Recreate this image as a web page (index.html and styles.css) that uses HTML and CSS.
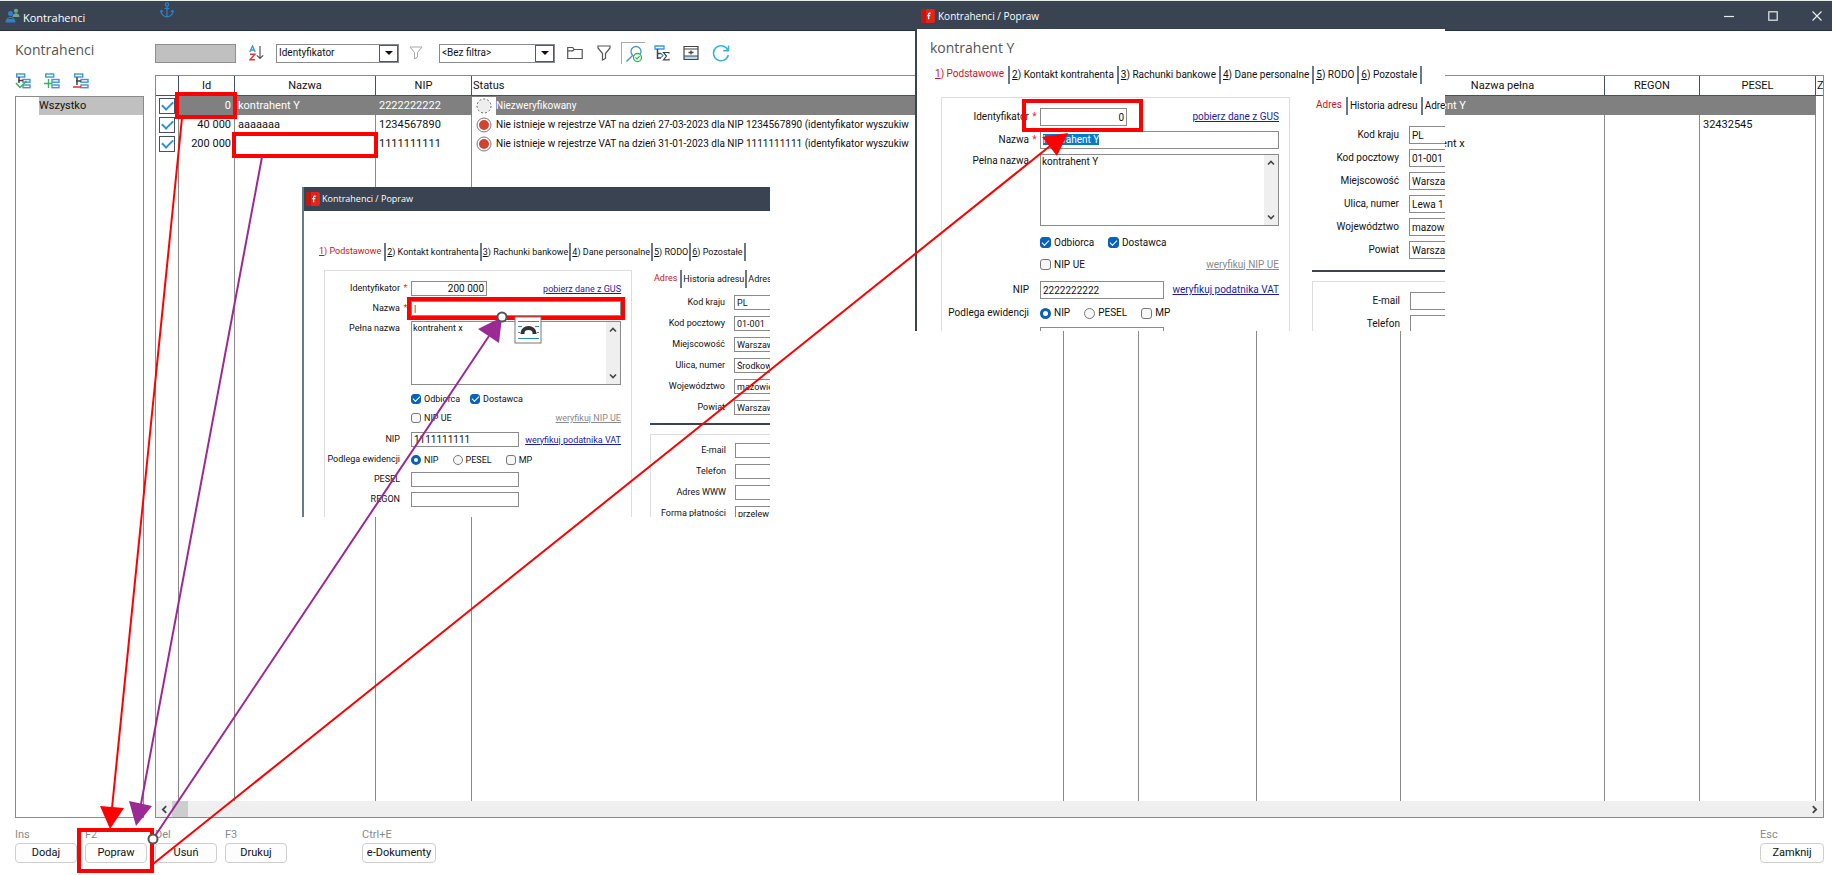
FILE: index.html
```html
<!DOCTYPE html>
<html lang="pl">
<head>
<meta charset="utf-8">
<title>Kontrahenci</title>
<link rel="stylesheet" href="styles.css">
</head>
<body>
<svg class="defs" aria-hidden="true">
  <symbol id="logo" viewBox="0 0 14 14"><rect width="14" height="14" rx="2" fill="#e1251b"/><path d="M0 2a2 2 0 0 1 2-2h3v14H2a2 2 0 0 1-2-2z" fill="#c4170f"/><path d="M9.600 4.300Q7.600 3.800 7.600 5.700V10.300M6.300 6.600h2.900" fill="none" stroke="#fff" stroke-width="1.300"/></symbol>
  <symbol id="tree" viewBox="0 0 16 16"><g fill="none" stroke="#3f97d3" stroke-width="1.400"><rect x="1.700" y="1" width="8" height="3"/><rect x="8" y="6.500" width="7" height="2.700"/><rect x="8" y="12" width="7" height="2.700"/></g></symbol>
  <symbol id="chev" viewBox="0 0 8 8"><path d="M1 5.500 4 2.500 7 5.500" fill="none" stroke="#444" stroke-width="1.600"/></symbol>
</svg>
<div class="app">
  <header class="titlebar">
    <svg class="titlebar-icon" viewBox="0 0 15 15"><circle cx="11" cy="2.800" r="2.100" fill="#6fa58c"/><path d="M7.500 9c0-5 7-5 7 0z" fill="#6fa58c"/><circle cx="5.500" cy="5.500" r="2.500" fill="#2f80cb"/><path d="M.5 14.500c0-7.500 10-7.500 10 0z" fill="#2f80cb"/><path d="M3.500 10.500h4" stroke="#39434f"/></svg>
    <span class="titlebar-text">Kontrahenci</span>
    <svg class="anchor" viewBox="0 0 14 16"><g fill="none" stroke="#2f80cb" stroke-width="1.200"><circle cx="7" cy="2.500" r="1.700"/><path d="M7 4.200V15M4.500 6.500h5M1 8.500c0 4 2.500 6 6 6.500 3.500-.5 6-2.500 6-6.500M.5 10.500 1.200 8.500 3 9.700M13.500 10.500 12.800 8.500 11 9.700"/></g></svg>
    <div class="win-controls">
      <button aria-label="Minimalizuj"><svg viewBox="0 0 10 10"><path d="M0 5.500h10" stroke="#e8eaed" stroke-width="1.200"/></svg></button>
      <button aria-label="Maksymalizuj"><svg viewBox="0 0 10 10"><rect x=".8" y=".8" width="8.400" height="8.400" fill="none" stroke="#e8eaed" stroke-width="1.200"/></svg></button>
      <button aria-label="Zamknij okno"><svg viewBox="0 0 10 10"><path d="M.5.5l9 9M9.500.5l-9 9" stroke="#e8eaed" stroke-width="1.200"/></svg></button>
    </div>
  </header>

  <div class="body">
    <aside class="side">
      <h1 class="heading">Kontrahenci</h1>
      <div class="side-tools">
        <button aria-label="Zaznacz grupę"><svg viewBox="0 0 16 16"><use href="#tree"/><path d="M4 4v6M3 7.500h5" stroke="#444" stroke-width="1.500"/><path d="M1 10 5 14.500 11.500 8" fill="none" stroke="#35b558" stroke-width="1.500"/></svg></button>
        <button aria-label="Dodaj grupę"><svg viewBox="0 0 16 16"><use href="#tree"/><path d="M4.500 6v9M0 10.500h8.500" stroke="#35b558" stroke-width="1.400"/></svg></button>
        <button aria-label="Usuń grupę"><svg viewBox="0 0 16 16"><use href="#tree"/><path d="M4 4v8M3 8h5" stroke="#444" stroke-width="1.500"/><path d="M0 14h8" stroke="#e23b3b" stroke-width="1.600"/></svg></button>
      </div>
      <div class="tree"><div class="tree-item">Wszystko</div></div>
    </aside>

    <main class="main">
      <div class="toolbar">
        <input class="search" type="text" aria-label="Szukaj">
        <button class="tool" aria-label="Sortuj"><svg class="i-sort" viewBox="0 0 15 16"><g fill="none" stroke-width="1.400"><path d="M.8 7 3.500 1 6.200 7M1.800 5h3.400" stroke="#3f97d3"/><path d="M1 9.200h5L1 14.800h5" stroke="#e23b3b"/><path d="M11 1v12M7.800 10.300 11 13.500l3.200-3.200" stroke="#555" stroke-width="1.200"/></g></svg></button>
        <div class="combo combo-wide"><select aria-label="Sortowanie"><option>Identyfikator</option></select><span class="combo-arrow"></span></div>
        <button class="tool" aria-label="Filtr"><svg class="i-14 pale" viewBox="0 0 14 14"><path d="M1 1h12L8.500 6.500V11L5.500 13V6.500z" fill="none" stroke="#555"/></svg></button>
        <div class="combo"><select aria-label="Filtr"><option>&lt;Bez filtra&gt;</option></select><span class="combo-arrow"></span></div>
        <div class="tool-group">
          <button class="tool" aria-label="Otwórz"><svg class="i-16" viewBox="0 0 16 16"><path d="M.7 13.500v-11h5l1.500 2h8v9zM.7 5.800h5l1.500-1.300" fill="none" stroke="#555" stroke-width="1.200"/></svg></button>
          <button class="tool" aria-label="Filtruj"><svg class="i-16" viewBox="0 0 16 16"><path d="M2 1h12v2L9.500 8.500v5L6.500 15V8.500L2 3z" fill="none" stroke="#555" stroke-width="1.200"/></svg></button>
          <button class="tool tool-on" aria-label="Weryfikuj"><svg class="i-18" viewBox="0 0 18 18"><circle cx="11" cy="6.500" r="5" fill="none" stroke="#3f97d3" stroke-width="1.300"/><path d="M7.500 10.500 1.500 16.500" stroke="#3f97d3" stroke-width="1.500"/><circle cx="12.500" cy="12.500" r="4" fill="#fff" stroke="#35b558" stroke-width="1.300"/><path d="M10.500 12.500l1.500 1.500 2.700-2.900" fill="none" stroke="#35b558" stroke-width="1.200"/></svg></button>
          <button class="tool" aria-label="Sumy"><svg class="i-16" viewBox="0 0 16 16"><path d="M1 1h9v3H1z" fill="none" stroke="#3f97d3" stroke-width="1.300"/><path d="M3.500 4v10M3 8.500h4M3 13h4" fill="none" stroke="#444" stroke-width="1.500"/><path d="M7 8.500l2 2-2 2" fill="none" stroke="#3f97d3" stroke-width="1.200"/><path d="M15 8.500V7.500H9.500l3 3.500-3 3.800H15v-1" fill="none" stroke="#444" stroke-width="1.200"/></svg></button>
          <button class="tool" aria-label="Panel"><svg class="i-16" viewBox="0 0 16 16"><path d="M1 11h14v3H1z" fill="#b5daf2"/><path d="M1 1.500h14v13H1zM1 4h14M1 11h14" fill="none" stroke="#444" stroke-width="1.200"/><path d="M8 5.500v4M5.500 7.500h5" stroke="#444" stroke-width="1.300"/></svg></button>
          <button class="tool" aria-label="Odśwież"><svg class="i-18" viewBox="0 0 18 18"><path d="M16 6.500A7.500 7.500 0 1 0 16.300 11M16.500 1.500v5.300h-5.300" fill="none" stroke="#35b3dc" stroke-width="1.500"/></svg></button>
        </div>
      </div>

      <div class="grid-box">
        <div class="grid-scroll">
        <table class="grid">
          <colgroup><col class="c-check"><col class="c-id"><col class="c-name"><col class="c-nip"><col><col class="c-a"><col class="c-b"><col class="c-c"><col class="c-full"><col class="c-regon"><col class="c-pesel"><col class="c-z"></colgroup>
          <thead><tr><th></th><th>Id</th><th>Nazwa</th><th>NIP</th><th class="left">Status</th><th></th><th></th><th></th><th>Nazwa pełna</th><th>REGON</th><th>PESEL</th><th class="left">Z</th></tr></thead>
          <tbody>
            <tr class="sel"><td class="tick"><input type="checkbox" checked aria-label="kontrahent Y"></td><td class="num">0</td><td>kontrahent Y</td><td>2222222222</td><td class="status"><span class="status-line"><svg class="st st-none" viewBox="0 0 24 18"><circle cx="12" cy="9" r="7" fill="#eee" stroke="#666" stroke-dasharray="2 2"/></svg>Niezweryfikowany</span></td><td></td><td></td><td></td><td>kontrahent Y</td><td></td><td></td><td class="blank"></td></tr>
            <tr><td class="tick"><input type="checkbox" checked aria-label="aaaaaaa"></td><td class="num">40 000</td><td>aaaaaaa</td><td>1234567890</td><td class="status"><span class="status-line"><svg class="st" viewBox="0 0 24 18"><circle cx="12" cy="9" r="7" fill="#fff" stroke="#777"/><circle cx="12" cy="9" r="5" fill="#d0432f"/></svg>Nie istnieje w rejestrze VAT na dzień 27-03-2023 dla NIP 1234567890 (identyfikator wyszukiw</span></td><td></td><td></td><td></td><td></td><td></td><td>32432545</td><td></td></tr>
            <tr><td class="tick"><input type="checkbox" checked aria-label="200 000"></td><td class="num">200 000</td><td></td><td>1111111111</td><td class="status"><span class="status-line"><svg class="st" viewBox="0 0 24 18"><circle cx="12" cy="9" r="7" fill="#fff" stroke="#777"/><circle cx="12" cy="9" r="5" fill="#d0432f"/></svg>Nie istnieje w rejestrze VAT na dzień 31-01-2023 dla NIP 1111111111 (identyfikator wyszukiw</span></td><td></td><td></td><td></td><td>kontrahent x</td><td></td><td></td><td></td></tr>
            <tr class="filler"><td></td><td></td><td></td><td></td><td></td><td></td><td></td><td></td><td></td><td></td><td></td><td></td></tr>
          </tbody>
        </table>
        </div>
        <div class="hscroll"><svg class="to-left" viewBox="0 0 8 8"><use href="#chev"/></svg><span class="thumb"></span><svg class="to-right" viewBox="0 0 8 8"><use href="#chev"/></svg></div>
      </div>
    </main>
  </div>

  <footer class="actions">
    <div class="action"><span>Ins</span><button>Dodaj</button></div>
    <div class="action"><span>F2</span><button>Popraw</button></div>
    <div class="action"><span>Del</span><button>Usuń</button></div>
    <div class="action"><span>F3</span><button>Drukuj</button></div>
    <div class="action action-docs"><span>Ctrl+E</span><button>e-Dokumenty</button></div>
    <div class="action action-close"><span>Esc</span><button>Zamknij</button></div>
  </footer>

  <section class="dialog dialog-small">
    <header class="dialog-title"><svg viewBox="0 0 14 14"><use href="#logo"/></svg>Kontrahenci / Popraw</header>
    <h2 class="dialog-heading"></h2>
    <nav class="tabs"><button class="on"><u>1</u>) Podstawowe</button><button><u>2</u>) Kontakt kontrahenta</button><button><u>3</u>) Rachunki bankowe</button><button><u>4</u>) Dane personalne</button><button><u>5</u>) RODO</button><button><u>6</u>) Pozostałe</button></nav>
    <div class="dialog-body">
      <div class="form">
        <label for="s-id">Identyfikator</label><i>*</i><div class="line"><input class="t-id" id="s-id" type="text" value="200 000"><a href="#">pobierz dane z GUS</a></div>
        <label for="s-nm">Nazwa</label><i>*</i><div class="line"><input id="s-nm" type="text" value="|"></div>
        <label class="top" for="s-fn">Pełna nazwa</label><i></i><div class="area"><textarea id="s-fn">kontrahent x</textarea><div class="vscroll"><svg viewBox="0 0 8 8"><use href="#chev"/></svg><svg class="down" viewBox="0 0 8 8"><use href="#chev"/></svg></div></div>
        <div class="checks"><label class="opt opt-wide"><input type="checkbox" checked>Odbiorca</label><label class="opt"><input type="checkbox" checked>Dostawca</label></div>
        <div class="checks checks-last"><label class="opt"><input type="checkbox">NIP UE</label><a class="off" href="#">weryfikuj NIP UE</a></div>
        <label for="s-nip">NIP</label><i></i><div class="line"><input class="t-nip" id="s-nip" type="text" value="1111111111"><a href="#">weryfikuj podatnika VAT</a></div>
        <span class="lab">Podlega ewidencji</span><i></i><div class="line radios"><label class="opt"><input type="radio" name="s-e" checked>NIP</label><label class="opt"><input type="radio" name="s-e">PESEL</label><label class="opt"><input type="checkbox">MP</label></div>
        <label for="s-pes">PESEL</label><i></i><div class="line"><input class="t-nip" id="s-pes" type="text"></div>
        <label for="s-reg">REGON</label><i></i><div class="line"><input class="t-nip" id="s-reg" type="text"></div>
      </div>
      <div class="address">
        <nav class="tabs tabs-sub"><button class="on">Adres</button><button>Historia adresu</button><button>Adres</button></nav>
        <div class="pairs">
          <label for="s-kk">Kod kraju</label><input id="s-kk" type="text" value="PL">
          <label for="s-kp">Kod pocztowy</label><input id="s-kp" type="text" value="01-001">
          <label for="s-mi">Miejscowość</label><input id="s-mi" type="text" value="Warszawa">
          <label for="s-ul">Ulica, numer</label><input id="s-ul" type="text" value="Środkowa 1">
          <label for="s-wo">Województwo</label><input id="s-wo" type="text" value="mazowieckie">
          <label for="s-po">Powiat</label><input id="s-po" type="text" value="Warszawa">
        </div>
        <div class="pairs contact">
          <label for="s-em">E-mail</label><input id="s-em" type="text">
          <label for="s-te">Telefon</label><input id="s-te" type="text">
          <label for="s-ww">Adres WWW</label><input id="s-ww" type="text">
          <label for="s-fp">Forma płatności</label><input id="s-fp" type="text" value="przelew">
        </div>
      </div>
    </div>
  </section>

  <section class="dialog dialog-large">
    <header class="dialog-title"><svg viewBox="0 0 14 14"><use href="#logo"/></svg>Kontrahenci / Popraw</header>
    <h2 class="dialog-heading">kontrahent Y</h2>
    <nav class="tabs"><button class="on"><u>1</u>) Podstawowe</button><button><u>2</u>) Kontakt kontrahenta</button><button><u>3</u>) Rachunki bankowe</button><button><u>4</u>) Dane personalne</button><button><u>5</u>) RODO</button><button><u>6</u>) Pozostałe</button></nav>
    <div class="dialog-body">
      <div class="form">
        <label for="l-id">Identyfikator</label><i>*</i><div class="line"><input class="t-id" id="l-id" type="text" value="0"><a href="#">pobierz dane z GUS</a></div>
        <label for="l-nm">Nazwa</label><i>*</i><div class="line"><div class="edit" id="l-nm" role="textbox" contenteditable="true"><mark>kontrahent Y</mark></div></div>
        <label class="top" for="l-fn">Pełna nazwa</label><i></i><div class="area"><textarea id="l-fn">kontrahent Y</textarea><div class="vscroll"><svg viewBox="0 0 8 8"><use href="#chev"/></svg><svg class="down" viewBox="0 0 8 8"><use href="#chev"/></svg></div></div>
        <div class="checks"><label class="opt opt-wide"><input type="checkbox" checked>Odbiorca</label><label class="opt"><input type="checkbox" checked>Dostawca</label></div>
        <div class="checks checks-last"><label class="opt"><input type="checkbox">NIP UE</label><a class="off" href="#">weryfikuj NIP UE</a></div>
        <label for="l-nip">NIP</label><i></i><div class="line"><input class="t-nip" id="l-nip" type="text" value="2222222222"><a href="#">weryfikuj podatnika VAT</a></div>
        <span class="lab">Podlega ewidencji</span><i></i><div class="line radios"><label class="opt"><input type="radio" name="l-e" checked>NIP</label><label class="opt"><input type="radio" name="l-e">PESEL</label><label class="opt"><input type="checkbox">MP</label></div>
        <span></span><i></i><div class="line"><input class="t-nip" type="text" aria-label="PESEL"></div>
      </div>
      <div class="address">
        <nav class="tabs tabs-sub"><button class="on">Adres</button><button>Historia adresu</button><button>Adre</button></nav>
        <div class="pairs">
          <label for="l-kk">Kod kraju</label><input id="l-kk" type="text" value="PL">
          <label for="l-kp">Kod pocztowy</label><input id="l-kp" type="text" value="01-001">
          <label for="l-mi">Miejscowość</label><input id="l-mi" type="text" value="Warszawa">
          <label for="l-ul">Ulica, numer</label><input id="l-ul" type="text" value="Lewa 1">
          <label for="l-wo">Województwo</label><input id="l-wo" type="text" value="mazowieckie">
          <label for="l-po">Powiat</label><input id="l-po" type="text" value="Warszawa">
        </div>
        <div class="pairs contact">
          <label for="l-em">E-mail</label><input id="l-em" type="text">
          <label for="l-te">Telefon</label><input id="l-te" type="text">
        </div>
      </div>
    </div>
  </section>

  <svg class="marks" width="1832" height="875" viewBox="0 0 1832 875" aria-hidden="true">
    <g fill="none" stroke="#fe0000" stroke-width="4">
      <rect x="177" y="94" width="58" height="23"/>
      <rect x="234" y="134" width="142" height="22"/>
      <rect x="409" y="299" width="214" height="19"/>
      <rect x="1024" y="101" width="117" height="29"/>
      <rect x="79" y="830" width="73" height="41"/>
    </g>
    <g fill="none" stroke="#fe0000" stroke-width="2"><path d="M182 118 112 808M153 864 1050 146"/></g>
    <path d="M100 806l24 2-14 21zM1068 133l-26 4 15 19z" fill="#fe0000"/>
    <g fill="none" stroke="#9c2a94" stroke-width="2"><path d="M262 157 141 804M153 839 489 336"/></g>
    <path d="M129 801l23 5-16 20zM502 317l-24 12 21 14z" fill="#9c2a94"/>
    <g fill="#fff" stroke="#555" stroke-width="2"><circle cx="153" cy="839" r="4.500"/><circle cx="502" cy="317" r="4.500"/></g>
    <g fill="none"><rect x="515" y="317" width="26" height="26" fill="#fff" stroke="#777"/><path d="M518 321.500h21M518 326.500h4M535 326.500h4M518 332.500h2M537 332.500h2M518 338.500h21" stroke="#2b88c8"/><path d="M522.500 334v-1a6 5 0 0 1 12 0v1" stroke="#333" stroke-width="4"/></g>
  </svg>
</div>
</body>
</html>
```
FILE: styles.css
```css
* { box-sizing: border-box; }
body { margin: 0; background: #fff; color: #111; font: 11px/14px Roboto, "Liberation Sans", Arial, sans-serif; }
button, input, select, textarea { font: inherit; color: inherit; margin: 0; padding: 0; border: 0; background: none; border-radius: 0; }
.defs { position: absolute; width: 0; height: 0; }
svg { display: block; flex: none; }

.app { position: relative; display: flex; flex-direction: column; height: 100vh; overflow: hidden; border-top: 1px solid #e6efe6; }
.titlebar { display: flex; align-items: center; height: 30px; flex: none; padding: 0 10px 0 5px; background: #394352; border-bottom: 1px solid #22304a; color: #fff; font: 11px/16px "Open Sans", sans-serif; }
.titlebar-icon { width: 15px; height: 15px; margin-right: 3px; }
.titlebar-text { width: 137px; padding-top: 4px; }
.anchor { width: 14px; height: 16px; margin-bottom: 12px; }
.win-controls { display: flex; gap: 34px; margin-left: auto; }
.win-controls svg { width: 10px; height: 10px; }

.body { display: grid; grid-template-columns: 129px minmax(0, 1fr); gap: 11px; flex: 1; min-height: 0; padding: 0 8px 0 15px; }
.side, .main { display: flex; flex-direction: column; min-height: 0; }
.heading { margin: 0; padding-top: 7px; height: 42px; font: 14px/24px "Open Sans", sans-serif; color: #555; }
.side-tools { display: flex; gap: 13px; height: 23px; }
.side-tools button { height: 16px; }
.side-tools svg { width: 16px; height: 16px; }
.tree { flex: 1; border: 1px solid #8a8a8a; padding-left: 23px; }
.tree-item { height: 18px; line-height: 18px; background: #c0c0c0; }

.toolbar { display: flex; align-items: center; height: 44px; font-size: 10px; }
.search { width: 81px; height: 19px; background: #c0c0c0; border: 1px solid #8e8e8e; margin-right: 13px; }
.tool { display: flex; align-items: center; justify-content: center; height: 22px; }
.i-sort { width: 15px; height: 16px; margin-right: 12px; }
.i-14 { width: 14px; height: 14px; margin: 0 16px 0 10px; }
.pale { opacity: .5; }
.i-16 { width: 16px; height: 16px; }
.i-18 { width: 18px; height: 18px; }
.combo { display: flex; width: 116px; height: 19px; border: 1px solid #8a8a8a; }
.combo-wide { width: 123px; }
.combo select { flex: 1; min-width: 0; appearance: none; padding-left: 2px; }
.combo-arrow { width: 19px; border: 1px solid #4d5a6e; display: grid; place-items: center; }
.combo-arrow::before { content: ""; border: 4px solid transparent; border-top-color: #111; border-bottom: 0; }
.tool-group { display: flex; gap: 13px; margin-left: 12px; }
.tool-on { border: 1px solid #aaa; border-right: 0; border-bottom: 0; padding: 0 1px; width: 24px; margin: 0 -4px; }

.grid-box { display: flex; flex-direction: column; flex: 1; min-height: 0; border: 1px solid #8a8a8a; }
.grid-scroll { flex: 1; min-height: 0; overflow: hidden; }
.grid { width: 100%; height: 100%; table-layout: fixed; border-collapse: separate; border-spacing: 0; }
.grid th, .grid td { height: 19px; padding: 0 3px; overflow: hidden; white-space: nowrap; text-align: left; border-right: 1px solid #8a8a8a; }
.grid th { height: 20px; font-weight: 400; text-align: center; border-color: #445066; border-bottom: 1px solid #445066; }
.grid th.left { text-align: left; padding-left: 1px; }
.grid th:last-child, .grid td:last-child { border-right: 0; }
.grid .num { text-align: right; }
.grid .filler td { height: auto; }
.c-check { width: 23px; } .c-id { width: 56px; } .c-name { width: 141px; } .c-nip { width: 96px; }
.c-a { width: 75px; } .c-b { width: 118px; } .c-c { width: 144px; } .c-full { width: 204px; }
.c-regon { width: 95px; } .c-pesel { width: 116px; } .c-z { width: 7px; }
.sel { background: #808080; color: #fff; }
.grid .sel td { border-color: #808080; }
.grid .sel .blank { background: #fff; }
.grid .tick { padding: 0 0 0 3px; background: #fff; }
.tick input { appearance: none; width: 16px; height: 16px; border: 1px solid #445066; display: grid; place-items: center; background: #fff; }
.tick input:checked::before { content: ""; width: 9px; height: 5px; border: solid #2f8fd8; border-width: 0 0 2px 2px; transform: translateY(-1px) rotate(-45deg); }
.grid .status { padding: 0; font-size: 10px; }
.status-line { display: flex; align-items: center; }
.st { width: 24px; height: 18px; }
.st-none { background: #fff; }

.hscroll { display: flex; align-items: center; height: 16px; padding: 0 4px; background: #efefef; }
.hscroll svg { width: 9px; height: 9px; }
.to-left { transform: rotate(-90deg); }
.to-right { transform: rotate(90deg); margin-left: auto; }
.thumb { width: 16px; height: 16px; background: #cdcdcd; margin-left: 3px; }

.actions { display: flex; gap: 8px; height: 57px; flex: none; padding: 10px 8px 0 15px; }
.action { display: flex; flex-direction: column; width: 62px; color: #8a8a8a; }
.action button { height: 20px; margin-top: 1px; border: 1px solid #cfcfcf; border-radius: 4px; background: #fdfdfd; color: #111; }
.action-docs { width: 74px; margin-left: 67px; }
.action-close { width: 64px; margin-left: auto; }

/* edit dialogs: one layout in two densities */
.dialog { position: absolute; display: flex; flex-direction: column; overflow: hidden; background: #fff; }
.dialog-large { left: 915px; top: 1px; width: 530px; height: 329px; border-left: 2px solid #394352; font-size: 10px;
  --row: 18px; --title: 27px; --area: 72px; --lab: 87px; --field: 239px; --id: 87px; --nip: 124px; --check: 11px; --pad: 3px; --optrow: 17px; --opt: 68px; --bar: 14px; }
.dialog-small { left: 302px; top: 186px; width: 468px; height: 330px; border-left: 2px solid #6a788c; font-size: 9px; line-height: 12px;
  --row: 15px; --title: 24px; --area: 64px; --lab: 75px; --field: 210px; --id: 76px; --nip: 108px; --check: 10px; --pad: 2px; --optrow: 14px; --opt: 59px; --bar: 14px; }
.dialog-title { display: flex; align-items: center; gap: 3px; flex: none; height: var(--title); padding-left: 4px; background: #394352; color: #fff; font: 10px/16px "Open Sans", sans-serif; }
.dialog-title svg { width: 14px; height: 14px; }
.dialog-small .dialog-title { font-size: 9px; padding-left: 2px; gap: 2px; }
.dialog-heading { margin: 0; height: 37px; flex: none; padding: 7px 0 0 13px; font: 14px/24px "Open Sans", sans-serif; color: #555; }
.dialog-small .dialog-heading { height: 32px; }
.tabs { display: flex; flex: none; height: 31px; padding-left: 18px; }
.dialog-small .tabs { height: 27px; padding-left: 15px; }
.tabs button { height: 18px; padding: 0 3px 0 2px; border-right: 2px solid #6a788c; white-space: nowrap; }
.tabs .on { color: #c8141e; padding: 0 4px 2px 0; }
.dialog-small .tabs button { padding: 0 1px; }
.dialog-small .tabs .on { padding: 0 3px 2px 0; }
.dialog .tabs-sub { padding-left: 4px; height: 29px; }
.dialog-small .tabs-sub { height: 25px; }
.tabs-sub button:last-child { border: 0; }
.dialog-large .tabs-sub button:last-child { padding-right: 0; }
.dialog-body { display: flex; flex: none; }
.form { display: grid; grid-template-columns: var(--lab) 11px var(--field); row-gap: 5px; align-content: start; margin-left: 24px; padding: 10px 10px 20px 0; border: 1px solid #ddd; }
.dialog-small .form { margin-left: 20px; }
.form > label, .form > .lab { text-align: right; line-height: var(--row); white-space: nowrap; }
.form > .lab { justify-self: end; }
.form .top { line-height: 14px; }
.form i { color: #f22; font-style: normal; line-height: var(--row); text-align: center; }
.line { display: flex; align-items: center; justify-content: space-between; height: var(--row); }
.line > a { white-space: nowrap; }
.line > input, .edit, .area, .pairs input { border: 1px solid #8a8a8a; height: var(--row); padding: 0 2px; min-width: 0; }
.line > input, .edit { flex: 1; }
.edit { line-height: 16px; }
.edit mark { background: #0a78c8; color: #fff; }
.line > .t-id { flex: none; width: var(--id); text-align: right; }
.line > .t-nip { flex: none; width: var(--nip); }
.dialog-small .t-id, .dialog-small .t-nip { font-size: 10px; }
.area { display: flex; height: var(--area); padding: 0; }
.area textarea { flex: 1; min-width: 0; resize: none; padding: 0 1px; }
.vscroll { display: flex; flex-direction: column; justify-content: space-between; align-items: center; width: var(--bar); padding: 4px 0; background: #efefef; }
.vscroll svg { width: 8px; height: 8px; }
.down { transform: rotate(180deg); }
a { color: #1c1ca0; text-decoration: underline; }
a.off { color: #8a8a8a; }
.checks { grid-column: 3; display: flex; align-items: center; height: var(--optrow); margin-top: var(--pad); }
.checks-last { margin: 0 0 var(--pad); }
.checks a { margin-left: auto; }
.opt { display: flex; align-items: center; gap: 3px; white-space: nowrap; }
.opt-wide { flex: none; width: var(--opt); }
.radios { justify-content: flex-start; gap: 14px; }
.opt input { appearance: none; width: var(--check); height: var(--check); border: 1px solid #777; border-radius: 3px; background: #f7f7f7; display: grid; place-items: center; }
.opt input:checked { background: #0a62b8; border-color: #0a62b8; }
.opt input:checked::before { content: ""; width: 6px; height: 3px; border: solid #fff; border-width: 0 0 1px 1px; transform: translateY(-1px) rotate(-45deg); }
.opt input[type=radio] { border-radius: 50%; }
.opt input[type=radio]:checked { background: #fff; border-width: 3px; }
.opt input[type=radio]:checked::before { content: none; }
.address { display: flex; flex-direction: column; margin-left: 22px; }
.dialog-small .address { margin-left: 18px; }
.pairs { display: grid; grid-template-columns: var(--lab) 120px; gap: 5px 10px; padding-bottom: 11px; border-bottom: 2px solid #394352; }
.dialog-small .pairs { gap: 6px 9px; padding-bottom: 8px; }
.pairs label { text-align: right; line-height: var(--row); white-space: nowrap; }
.pairs.contact { margin-top: 9px; padding-top: 10px; border: solid #ddd; border-width: 1px 0 0 1px; }
.dialog-small .contact { padding-top: 8px; }

.marks { position: absolute; left: 0; top: -1px; pointer-events: none; }
```
